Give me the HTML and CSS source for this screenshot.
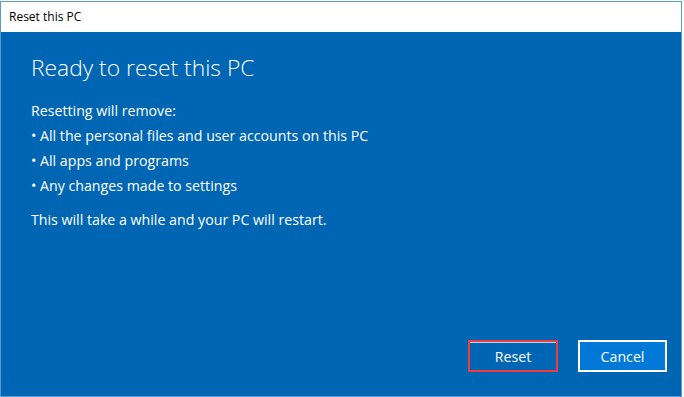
FILE: index.html
```html
<!DOCTYPE html>
<html lang="en">
<head>
    <meta charset="UTF-8">
    <title>Reset this PC</title>
    <link rel="stylesheet" href="styles.css">
</head>
<body>
    <div class="window">
        <div class="titlebar">Reset this PC</div>

        <div class="content">
            <h1 class="heading">Ready to reset this PC</h1>

            <div class="details">
                <p>Resetting will remove:</p>
                <p>&bull; All the personal files and user accounts on this PC</p>
                <p>&bull; All apps and programs</p>
                <p>&bull; Any changes made to settings</p>
            </div>

            <p class="note">This will take a while and your PC will restart.</p>

            <div class="buttons">
                <button class="btn btn-reset">Reset</button>
                <button class="btn btn-cancel">Cancel</button>
            </div>
        </div>
    </div>
</body>
</html>
```

FILE: styles.css
```css
body {
    margin: 0;
    background-color: #ffffff;
    font-family: 'Open Sans', 'Noto Sans', sans-serif;
    overflow: hidden;
}

.window {
    width: 680px;
    height: 394px;
    margin-top: 1px;
    border: 1px solid #5b9bd5;
    display: flex;
    flex-direction: column;
}

.titlebar {
    height: 30px;
    line-height: 30px;
    padding-left: 8px;
    background-color: #ffffff;
    color: #000000;
    font-size: 12px;
}

.content {
    flex: 1;
    background-color: #0066b4;
    color: #ffffff;
    padding: 18px 14px 24px 30px;
    display: flex;
    flex-direction: column;
}

.heading {
    margin: 0;
    font-size: 22.8px;
    font-weight: 300;
    line-height: 36px;
}

.details {
    margin-top: 12px;
}

.details p,
.note {
    margin: 0;
    font-size: 14.2px;
    line-height: 25px;
}

.note {
    margin-top: 9px;
}

.buttons {
    margin-top: auto;
    display: flex;
    justify-content: flex-end;
    gap: 20px;
}

.btn {
    width: 89px;
    height: 32px;
    font-family: inherit;
    font-size: 14.2px;
    color: #ffffff;
    padding: 0;
    cursor: pointer;
}

.btn-reset {
    width: 90px;
    background-color: #0066b4;
    border: 2px solid #f03c3f;
    box-shadow: inset 0 1px 0 #b5d3ee;
}

.btn-cancel {
    background-color: #0078d7;
    border: 2px solid #ffffff;
}
```
